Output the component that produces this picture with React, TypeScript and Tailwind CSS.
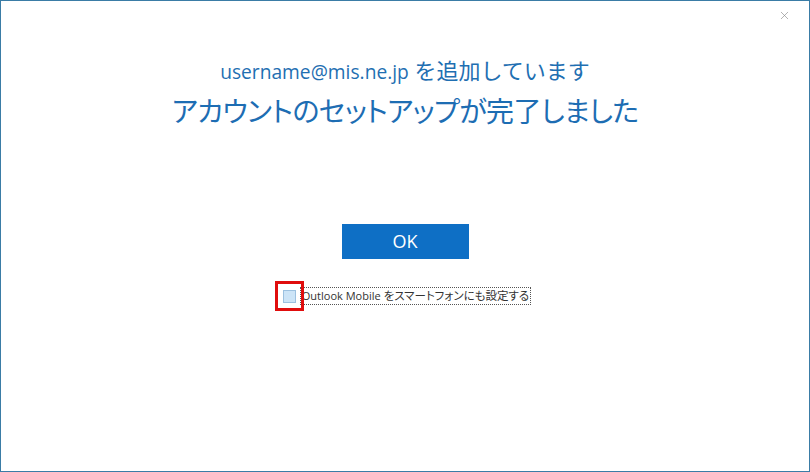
import { X } from 'lucide-react'

const jp = "font-['Segoe_UI','Open_Sans','Noto_Sans_CJK_JP',sans-serif]"

export default function App() {
  return (
    <div className={`relative flex h-[472px] w-[810px] flex-col items-center border border-[#3a7ca6] bg-white ${jp}`}>
      <button className="absolute right-[18px] top-[8px] text-[#8a8a8a]">
        <X size={13} strokeWidth={1.2} />
      </button>

      <div className="mt-[55px] text-[22px] leading-[28px] text-[#1f6fb2]">
        <span className="text-[19.2px]">username@mis.ne.jp</span> を追加しています
      </div>
      <h1 className="mt-[6px] text-[28px] leading-[38px] tracking-[-0.6px] text-[#1d6db3] [font-feature-settings:'palt']">
        アカウントのセットアップが完了しました
      </h1>

      <button className="mt-[94px] h-[35px] w-[127px] shrink-0 bg-[#0e6fc5] text-[18px] text-white">
        OK
      </button>

      <div className="mr-[4px] mt-[22px] flex items-center">
        <div className="relative flex h-[30px] w-[29px] shrink-0 items-center justify-center">
          <span className="h-[13px] w-[13px] border border-[#9cc1e0] bg-[#cce4f7]" />
          <span className="absolute inset-0 border-[3px] border-[#e00d0d]" />
        </div>
        <label className="-ml-[4px] border border-dotted border-[#555] px-[1px] text-[11.5px] leading-[16px] text-[#333] [font-feature-settings:'palt']">
          <span className="text-[11px]">Outlook Mobile</span> をスマートフォンにも設定する
        </label>
      </div>
    </div>
  )
}
